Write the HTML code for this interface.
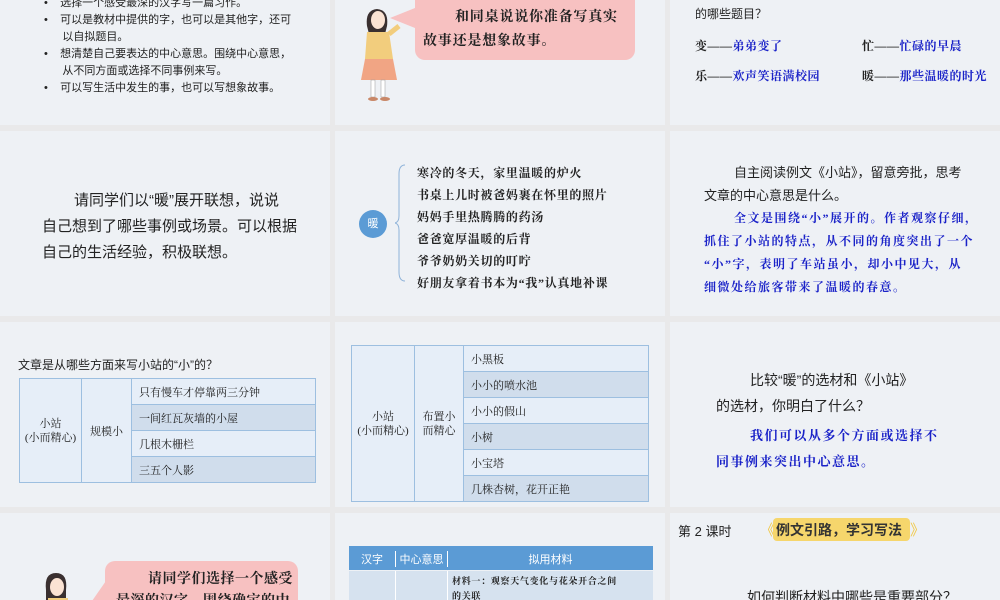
<!DOCTYPE html>
<html><head><meta charset="utf-8"><style>
*{margin:0;padding:0;box-sizing:border-box}
body{width:1000px;height:600px;background:#e9e9ea;position:relative;overflow:hidden;font-family:"Liberation Sans","Noto Sans CJK SC",sans-serif;color:#222}
.s{position:absolute;background:#eef1f5;overflow:hidden}
.t{position:absolute;white-space:nowrap}
.k{font-family:"Liberation Serif","Noto Serif CJK SC",serif;font-weight:bold}
.b{color:#1a22c8}
table{position:absolute;border-collapse:collapse;font-family:"Liberation Serif","Noto Serif CJK SC",serif;font-size:11px}
td{border:1px solid #9dbfe0;padding-left:7px}
.l{background:#e6eef8}.d{background:#d0ddec}
.bub{position:absolute;background:#f7c1c1;border-radius:10px}
</style></head><body>
<!-- row1 -->
<div class="s" style="left:0;top:0;width:330px;height:125px">
<div class="t" style="left:44px;top:-5px;font-size:11px;line-height:17px">
•&nbsp;&nbsp;&nbsp;&nbsp;选择一个感受最深的汉字写一篇习作。<br>
•&nbsp;&nbsp;&nbsp;&nbsp;可以是教材中提供的字，也可以是其他字，还可<br>
&nbsp;&nbsp;&nbsp;&nbsp;&nbsp;&nbsp;以自拟题目。<br>
•&nbsp;&nbsp;&nbsp;&nbsp;想清楚自己要表达的中心意思。围绕中心意思，<br>
&nbsp;&nbsp;&nbsp;&nbsp;&nbsp;&nbsp;从不同方面或选择不同事例来写。<br>
•&nbsp;&nbsp;&nbsp;&nbsp;可以写生活中发生的事，也可以写想象故事。</div>
</div>
<div class="s" style="left:335px;top:0;width:330px;height:125px">
<svg style="position:absolute;left:22px;top:4px" width="50" height="98">
<path d="M10 22 Q8 6 20 5 Q32 6 30 22 L28 30 L12 30Z" fill="#3a3030"/>
<ellipse cx="21" cy="16" rx="7" ry="9" fill="#fbe3d3"/>
<path d="M10 28 L32 28 L36 55 L8 55Z" fill="#f2cd7d"/>
<path d="M32 30 L42 22" stroke="#f2cd7d" stroke-width="5"/>
<path d="M8 55 L36 55 L40 76 L4 76Z" fill="#f1a584"/>
<rect x="14" y="76" width="4" height="17" fill="#fff" stroke="#999" stroke-width=".5"/>
<rect x="24" y="76" width="4" height="17" fill="#fff" stroke="#999" stroke-width=".5"/>
<ellipse cx="16" cy="95" rx="5" ry="2" fill="#c98868"/><ellipse cx="28" cy="95" rx="5" ry="2" fill="#c98868"/>
</svg>
<svg style="position:absolute;left:55px;top:0" width="30" height="40"><path d="M0 18 L30 6 L30 30Z" fill="#f7c1c1"/></svg>
<div class="bub" style="left:80px;top:-10px;width:220px;height:70px"></div>
<div class="t k" style="left:120px;top:6px;font-size:14px;line-height:24px;letter-spacing:0.8px">和同桌说说你准备写真实<br><span style="margin-left:-32px">故事还是想象故事。</span></div>
</div>
<div class="s" style="left:670px;top:0;width:330px;height:125px">
<div class="t" style="left:25px;top:5px;font-size:12px">的哪些题目？</div>
<div class="t k" style="left:25px;top:37px;font-size:12px;letter-spacing:0.5px">变——<span class="b">弟弟变了</span></div>
<div class="t k" style="left:192px;top:37px;font-size:12px;letter-spacing:0.5px">忙——<span class="b">忙碌的早晨</span></div>
<div class="t k" style="left:25px;top:67px;font-size:12px;letter-spacing:0.5px">乐——<span class="b">欢声笑语满校园</span></div>
<div class="t k" style="left:192px;top:67px;font-size:12px;letter-spacing:0.5px">暖——<span class="b">那些温暖的时光</span></div>
</div>
<!-- row2 -->
<div class="s" style="left:0;top:131px;width:330px;height:185px">
<div class="t" style="left:42px;top:57px;font-size:15px;line-height:26px"><span style="margin-left:32px"></span>请同学们以“暖”展开联想，说说<br>自己想到了哪些事例或场景。可以根据<br>自己的生活经验，积极联想。</div>
</div>
<div class="s" style="left:335px;top:131px;width:330px;height:185px">
<div style="position:absolute;left:24px;top:79px;width:28px;height:28px;border-radius:50%;background:#5b9bd5;color:#fff;font-size:11px;text-align:center;line-height:28px">暖</div>
<svg style="position:absolute;left:60px;top:33px" width="12" height="118"><path d="M10 1 Q4 1 4 10 L4 52 Q4 58 0 59 Q4 60 4 66 L4 108 Q4 117 10 117" stroke="#8fb3d9" fill="none"/></svg>
<div class="t k" style="left:82px;top:31px;font-size:12px;line-height:22px;letter-spacing:0.7px">寒冷的冬天，家里温暖的炉火<br>书桌上儿时被爸妈裹在怀里的照片<br>妈妈手里热腾腾的药汤<br>爸爸宽厚温暖的后背<br>爷爷奶奶关切的叮咛<br>好朋友拿着书本为“我”认真地补课</div>
</div>
<div class="s" style="left:670px;top:131px;width:330px;height:185px">
<div class="t" style="left:34px;top:30px;font-size:13px;line-height:23px"><span style="margin-left:30px"></span>自主阅读例文《小站》，留意旁批，思考<br>文章的中心意思是什么。</div>
<div class="t k b" style="left:34px;top:76px;font-size:12px;line-height:23px;letter-spacing:1.5px"><span style="margin-left:30px"></span>全文是围绕“小”展开的。作者观察仔细，<br>抓住了小站的特点，从不同的角度突出了一个<br>“小”字，表明了车站虽小，却小中见大，从<br>细微处给旅客带来了温暖的春意。</div>
</div>
<!-- row3 -->
<div class="s" style="left:0;top:322px;width:330px;height:185px">
<div class="t" style="left:18px;top:34px;font-size:12px">文章是从哪些方面来写小站的“小”的？</div>
<table style="left:19px;top:56px;width:297px">
<tr style="height:26px"><td rowspan="4" class="l" style="width:62px;text-align:center;padding:0;line-height:14px">小站<br>(小而精心)</td><td rowspan="4" class="l" style="width:50px;text-align:center;padding:0">规模小</td><td class="l">只有慢车才停靠两三分钟</td></tr>
<tr style="height:26px"><td class="d">一间红瓦灰墙的小屋</td></tr>
<tr style="height:26px"><td class="l">几根木栅栏</td></tr>
<tr style="height:26px"><td class="d">三五个人影</td></tr>
</table>
</div>
<div class="s" style="left:335px;top:322px;width:330px;height:185px">
<table style="left:16px;top:23px;width:298px">
<tr style="height:26px"><td rowspan="6" class="l" style="width:63px;text-align:center;padding:0;line-height:14px">小站<br>(小而精心)</td><td rowspan="6" class="l" style="width:49px;text-align:center;padding:0;line-height:14px">布置小<br>而精心</td><td class="l">小黑板</td></tr>
<tr style="height:26px"><td class="d">小小的喷水池</td></tr>
<tr style="height:26px"><td class="l">小小的假山</td></tr>
<tr style="height:26px"><td class="d">小树</td></tr>
<tr style="height:26px"><td class="l">小宝塔</td></tr>
<tr style="height:26px"><td class="d">几株杏树，花开正艳</td></tr>
</table>
</div>
<div class="s" style="left:670px;top:322px;width:330px;height:185px">
<div class="t" style="left:46px;top:45px;font-size:14px;line-height:26px"><span style="margin-left:34px"></span>比较“暖”的选材和《小站》<br>的选材，你明白了什么？</div>
<div class="t k b" style="left:46px;top:101px;font-size:13px;line-height:26px;letter-spacing:1.5px"><span style="margin-left:34px"></span>我们可以从多个方面或选择不<br>同事例来突出中心意思。</div>
</div>
<!-- row4 -->
<div class="s" style="left:0;top:513px;width:330px;height:87px">
<svg style="position:absolute;left:40px;top:57px" width="40" height="35"><path d="M6 20 Q4 3 16 3 Q28 3 26 20 L26 30 L6 30Z" fill="#3a3030"/><ellipse cx="17" cy="17" rx="7" ry="9" fill="#fbe3d3"/><rect x="8" y="28" width="20" height="10" fill="#f2cd7d"/></svg>
<svg style="position:absolute;left:88px;top:60px" width="20" height="30"><path d="M4 28 L20 5 L20 28Z" fill="#f7c1c1"/></svg>
<div class="bub" style="left:105px;top:48px;width:193px;height:60px"></div>
<div class="t k" style="left:116px;top:56px;font-size:14px;line-height:22px;letter-spacing:0.5px"><span style="margin-left:32px"></span>请同学们选择一个感受<br>最深的汉字，围绕确定的中</div>
</div>
<div class="s" style="left:335px;top:513px;width:330px;height:87px">
<div style="position:absolute;left:14px;top:33px;width:304px;height:24px;background:#5b9bd5"></div>
<div class="t" style="left:14px;top:38px;width:46px;text-align:center;color:#fff;font-size:11px">汉字</div>
<div class="t" style="left:60px;top:38px;width:52px;text-align:center;color:#fff;font-size:11px;border-left:1px solid #fff">中心意思</div>
<div class="t" style="left:112px;top:38px;width:206px;text-align:center;color:#fff;font-size:11px;border-left:1px solid #fff">拟用材料</div>
<div style="position:absolute;left:14px;top:58px;width:304px;height:40px;background:#d6e2ef"></div>
<div style="position:absolute;left:60px;top:58px;width:1px;height:40px;background:#fff"></div>
<div style="position:absolute;left:112px;top:58px;width:1px;height:40px;background:#fff"></div>
<div class="t k" style="left:117px;top:61px;font-size:9px;line-height:15px;letter-spacing:0.7px">材料一：观察天气变化与花朵开合之间<br>的关联</div>
</div>
<div class="s" style="left:670px;top:513px;width:330px;height:87px">
<div class="t" style="left:8px;top:8px;font-size:13px">第 2 课时</div>
<div class="t" style="left:90px;top:6px;font-size:15px;color:#f0c94a">《</div>
<div style="position:absolute;left:103px;top:5px;width:137px;height:23px;background:#f6d66c;border-radius:4px"></div>
<div class="t" style="left:240px;top:6px;font-size:15px;color:#f0c94a">》</div>
<div class="t" style="left:106px;top:7px;font-size:14px;font-weight:bold;color:#333">例文引路，学习写法</div>
<div class="t" style="left:77px;top:74px;font-size:14px">如何判断材料中哪些是重要部分？</div>
</div>
</body></html>
